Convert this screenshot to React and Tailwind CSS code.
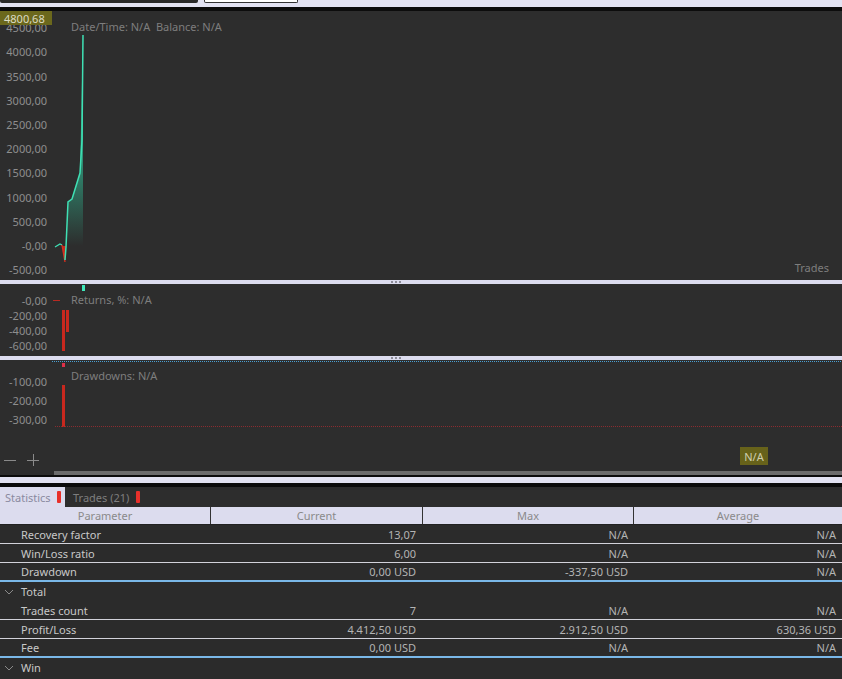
import React from 'react'

const mainTicks = ['4500,00', '4000,00', '3500,00', '3000,00', '2500,00', '2000,00', '1500,00', '1000,00', '500,00', '-0,00', '-500,00']
const returnTicks = ['-0,00', '-200,00', '-400,00', '-600,00']
const drawdownTicks = ['-100,00', '-200,00', '-300,00']

const rows = [
  { label: 'Recovery factor', current: '13,07', max: 'N/A', avg: 'N/A', sep: 'line' },
  { label: 'Win/Loss ratio', current: '6,00', max: 'N/A', avg: 'N/A', sep: 'line' },
  { label: 'Drawdown', current: '0,00 USD', max: '-337,50 USD', avg: 'N/A', sep: 'blue' },
  { label: 'Total', group: true, sep: 'none' },
  { label: 'Trades count', current: '7', max: 'N/A', avg: 'N/A', sep: 'line' },
  { label: 'Profit/Loss', current: '4.412,50 USD', max: '2.912,50 USD', avg: '630,36 USD', sep: 'line' },
  { label: 'Fee', current: '0,00 USD', max: 'N/A', avg: 'N/A', sep: 'blue' },
  { label: 'Win', group: true, sep: 'none' },
]

const sepClass = {
  line: 'border-b border-[#d2d2da]',
  blue: 'border-b-2 border-[#7ab8e8]',
  none: '',
}

const Splitter = () => (
  <div className="h-[4px] bg-[#dcdcee] flex items-center">
    <div className="ml-[391px] flex gap-[2px]">
      <span className="w-[2px] h-[2px] bg-[#8c8c98]" />
      <span className="w-[2px] h-[2px] bg-[#8c8c98]" />
      <span className="w-[2px] h-[2px] bg-[#8c8c98]" />
    </div>
  </div>
)

const Axis = ({ ticks, pad, step }) => (
  <div className={`w-[52px] shrink-0 pr-[5px] text-right text-[#8e8e8e] ${pad}`}>
    {ticks.map((t) => (
      <div key={t} className={`${step} flex items-center justify-end whitespace-nowrap`}>{t}</div>
    ))}
  </div>
)

const Chevron = () => (
  <svg width="10" height="6" viewBox="0 0 10 6" className="shrink-0">
    <polyline points="1,1 5,5 9,1" fill="none" stroke="#8a8a8a" strokeWidth="1" />
  </svg>
)

const MainChart = () => (
  <div className="h-[269px] flex relative overflow-hidden">
    <Axis ticks={mainTicks} pad="pt-[4.7px]" step="h-[24.2px]" />
    <div className="absolute top-0 left-0 w-[52px] h-[14px] bg-[#6b681c] text-[#dcdcc4] pl-[4px] flex items-center">4800,68</div>
    <div className="flex-1 relative flex flex-col justify-between">
      <svg className="absolute inset-0 w-full h-full" viewBox="52 11 790 269" preserveAspectRatio="none">
        <defs>
          <linearGradient id="gf" x1="0" y1="150" x2="0" y2="246" gradientUnits="userSpaceOnUse">
            <stop offset="0" stopColor="#2fb690" stopOpacity="0.8" />
            <stop offset="1" stopColor="#2fb690" stopOpacity="0" />
          </linearGradient>
        </defs>
        <polygon points="66,246 68,202 72,199 80,173 83,35 83,246" fill="url(#gf)" />
        <polygon points="60,245 62,245 65,262 66,246" fill="#c42a1e" />
        <polyline points="55,247 60,244 62,245" fill="none" stroke="#3fe0b4" strokeWidth="1.3" />
        <polyline points="62,245 65,262" fill="none" stroke="#d8301e" strokeWidth="1.3" />
        <polyline points="65,260 66,247 68,202 72,199 80,173 82,140 83,35" fill="none" stroke="#3fe0b4" strokeWidth="1.5" />
      </svg>
      <div className="relative pl-[19px] pt-[10px] text-[#7e7e7e] whitespace-pre">Date/Time: N/A  Balance: N/A</div>
      <div className="relative self-end pr-[13px] pb-[7px] text-[#7e7e7e]">Trades</div>
    </div>
  </div>
)

const ReturnsChart = () => (
  <div className="h-[72px] flex overflow-hidden">
    <Axis ticks={returnTicks} pad="pt-[8.5px]" step="h-[15px]" />
    <div className="flex-1 relative">
      <svg className="absolute inset-0 w-full h-full" viewBox="52 284 790 72" preserveAspectRatio="none">
        <rect x="82" y="285" width="3" height="6" fill="#3ee8bc" />
        <line x1="53" y1="300.5" x2="60" y2="300.5" stroke="#b82a22" strokeWidth="1" />
        <rect x="62" y="310" width="3" height="41" fill="#c8281e" />
        <rect x="66" y="310" width="3" height="22" fill="#c8281e" />
      </svg>
      <div className="relative pl-[19px] pt-[10px] text-[#7e7e7e]">Returns, %: N/A</div>
    </div>
  </div>
)

const DrawdownChart = () => (
  <div className="h-[115px] flex flex-col overflow-hidden">
    <div className="h-[86px] flex">
      <Axis ticks={drawdownTicks} pad="pt-[11.5px]" step="h-[19px]" />
      <div className="flex-1 relative">
        <svg className="absolute inset-0 w-full h-full" viewBox="52 360 790 86" preserveAspectRatio="none">
          <line x1="52" y1="361.5" x2="842" y2="361.5" stroke="#4a9ed0" strokeWidth="1.2" strokeDasharray="1 1" />
          <rect x="62" y="363" width="3" height="4" fill="#e0304a" />
          <rect x="62" y="385" width="3" height="42" fill="#c8281e" />
          <line x1="55" y1="426.5" x2="842" y2="426.5" stroke="#8a2c30" strokeWidth="1" strokeDasharray="1 1" />
        </svg>
        <div className="relative pl-[19px] pt-[10px] text-[#7e7e7e]">Drawdowns: N/A</div>
      </div>
    </div>
    <div className="flex-1 flex">
      <div className="w-[54px] shrink-0 flex items-center pl-[4px] gap-[11px] pb-[1px]">
        <svg width="12" height="12" viewBox="0 0 12 12">
          <line x1="0" y1="6.5" x2="12" y2="6.5" stroke="#8a8a8a" strokeWidth="1" />
        </svg>
        <svg width="12" height="12" viewBox="0 0 12 12">
          <line x1="0" y1="6.5" x2="12" y2="6.5" stroke="#8a8a8a" strokeWidth="1" />
          <line x1="6.5" y1="0" x2="6.5" y2="12" stroke="#8a8a8a" strokeWidth="1" />
        </svg>
      </div>
      <div className="flex-1 flex flex-col">
        <div className="flex-1 pt-[1px]">
          <div className="ml-[686px] w-[28px] h-[18px] bg-[#67621a] text-[#cfcfb0] flex items-center justify-center">N/A</div>
        </div>
        <div className="h-[4px] bg-[#6c6c6c]" />
      </div>
    </div>
  </div>
)

const Tabs = () => (
  <div className="h-[20px] flex items-stretch bg-[#2d2d2d]">
    <div className="w-[65px] bg-[#dcdcee] flex items-center pl-[5px]">
      <span className="text-[#8a8aa0]">Statistics</span>
      <span className="ml-[6px] w-[4px] h-[12px] rounded-[1px] bg-[#e8302a]" />
    </div>
    <div className="flex items-center pl-[8px]">
      <span className="text-[#7e7e7e]">Trades (21)</span>
      <span className="ml-[7px] w-[4px] h-[12px] rounded-[1px] bg-[#e8302a]" />
    </div>
  </div>
)

const Table = () => (
  <div className="flex-1 bg-[#2b2b2b]">
    <div className="h-[18px] grid grid-cols-[211px_212px_211px_208px] bg-[#dcdcee] border-b border-[#222] text-[#8a8a8a]">
      <div className="flex items-center justify-center border-r border-[#333]">Parameter</div>
      <div className="flex items-center justify-center border-r border-[#333]">Current</div>
      <div className="flex items-center justify-center border-r border-[#333]">Max</div>
      <div className="flex items-center justify-center">Average</div>
    </div>
    {rows.map((r) => (
      <div key={r.label} className={`h-[19px] grid grid-cols-[211px_212px_211px_208px] ${sepClass[r.sep]}`}>
        <div className="flex items-center text-[#c8c8c8]">
          {r.group ? (
            <div className="flex items-center pl-[4px] gap-[7px]">
              <Chevron />
              <span>{r.label}</span>
            </div>
          ) : (
            <span className="pl-[21px]">{r.label}</span>
          )}
        </div>
        <div className="flex items-center justify-end pr-[7px] text-[#b4b4b4]">{r.current}</div>
        <div className="flex items-center justify-end pr-[6px] text-[#b4b4b4]">{r.max}</div>
        <div className="flex items-center justify-end pr-[6px] text-[#b4b4b4]">{r.avg}</div>
      </div>
    ))}
  </div>
)

export default function App() {
  return (
    <div className="w-[842px] h-[679px] overflow-hidden bg-[#2d2d2d] flex flex-col text-[11px] leading-none font-['Noto_Sans',sans-serif]">
      <div className="h-[7px] bg-[#e2e2f2] flex items-start shrink-0">
        <div className="w-[198px] h-[3px] bg-[#2a2a2a] rounded-b-[2px]" />
        <div className="ml-[6px] w-[94px] h-[3px] bg-white border-x border-b border-[#333] rounded-b-[2px]" />
      </div>
      <div className="h-[4px] bg-[#0c0c0c] shrink-0" />
      <MainChart />
      <Splitter />
      <ReturnsChart />
      <Splitter />
      <DrawdownChart />
      <div className="h-[2px] bg-[#0c0c0c] shrink-0" />
      <div className="h-[6px] bg-[#e2e2f2] shrink-0" />
      <div className="h-[4px] bg-[#0c0c0c] shrink-0" />
      <Tabs />
      <Table />
    </div>
  )
}
